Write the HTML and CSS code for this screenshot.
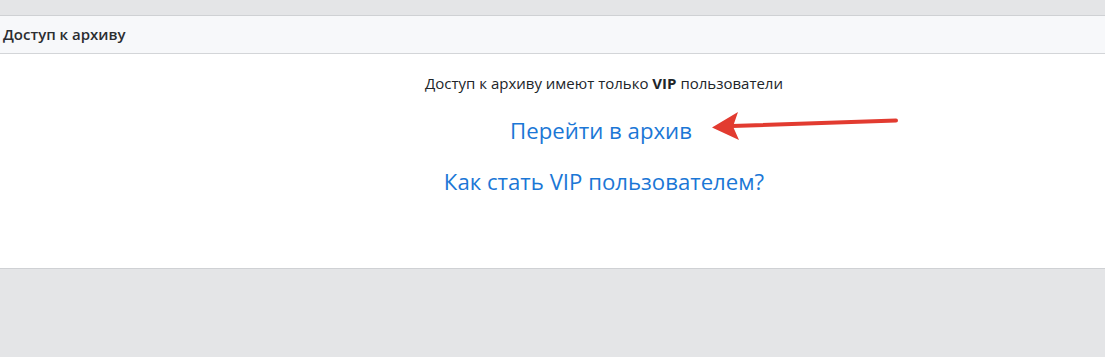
FILE: index.html
```html
<!DOCTYPE html>
<html lang="ru">
<head>
<meta charset="utf-8">
<link rel="stylesheet" href="styles.css">
</head>
<body>
<div class="top-gap"></div>
<section class="card">
  <div class="card-header">Доступ к архиву</div>
  <div class="card-body">
    <p class="note">Доступ к архиву имеют только <b>VIP</b> пользователи</p>
    <a class="big-link first" href="#">Перейти в архив</a>
    <a class="big-link" href="#">Как стать VIP пользователем?</a>
  </div>
</section>
<svg class="arrow" width="200" height="40" viewBox="700 105 200 40">
  <line x1="732" y1="126" x2="896" y2="120.5" stroke="#e23b30" stroke-width="4" stroke-linecap="round"/>
  <polygon points="712,127.5 738,112 733,126.5 739,140" fill="#e23b30"/>
</svg>
</body>
</html>
```
FILE: styles.css
```css
html, body {
  margin: 0;
  padding: 0;
}
body {
  background: #e4e5e7;
  font-family: "Open Sans", "Noto Sans", sans-serif;
  color: #212529;
  position: relative;
  height: 357px;
  overflow: hidden;
}
.top-gap {
  height: 15px;
}
.card {
  background: #fff;
  border-top: 1px solid #cfd1d4;
  border-bottom: 1px solid #cfd1d4;
}
.card-header {
  background: #f7f8fa;
  border-bottom: 1px solid #d3d5d8;
  height: 37px;
  line-height: 37px;
  padding-left: 3px;
  font-size: 15px;
  font-weight: 600;
  color: #2b2d30;
}
.card-body {
  height: 214px;
  padding-left: 103px;
  display: flex;
  flex-direction: column;
  align-items: center;
}
.note {
  margin: 19px 0 0;
  font-size: 15px;
  line-height: 20px;
}
.note b {
  font-weight: 700;
}
.big-link {
  color: #1b77d6;
  text-decoration: none;
  font-size: 22.2px;
  line-height: 30px;
}
.big-link.first {
  margin-top: 23px;
  margin-right: 6px;
}
.big-link + .big-link {
  margin-top: 21px;
}
.arrow {
  position: absolute;
  left: 700px;
  top: 105px;
}
```
